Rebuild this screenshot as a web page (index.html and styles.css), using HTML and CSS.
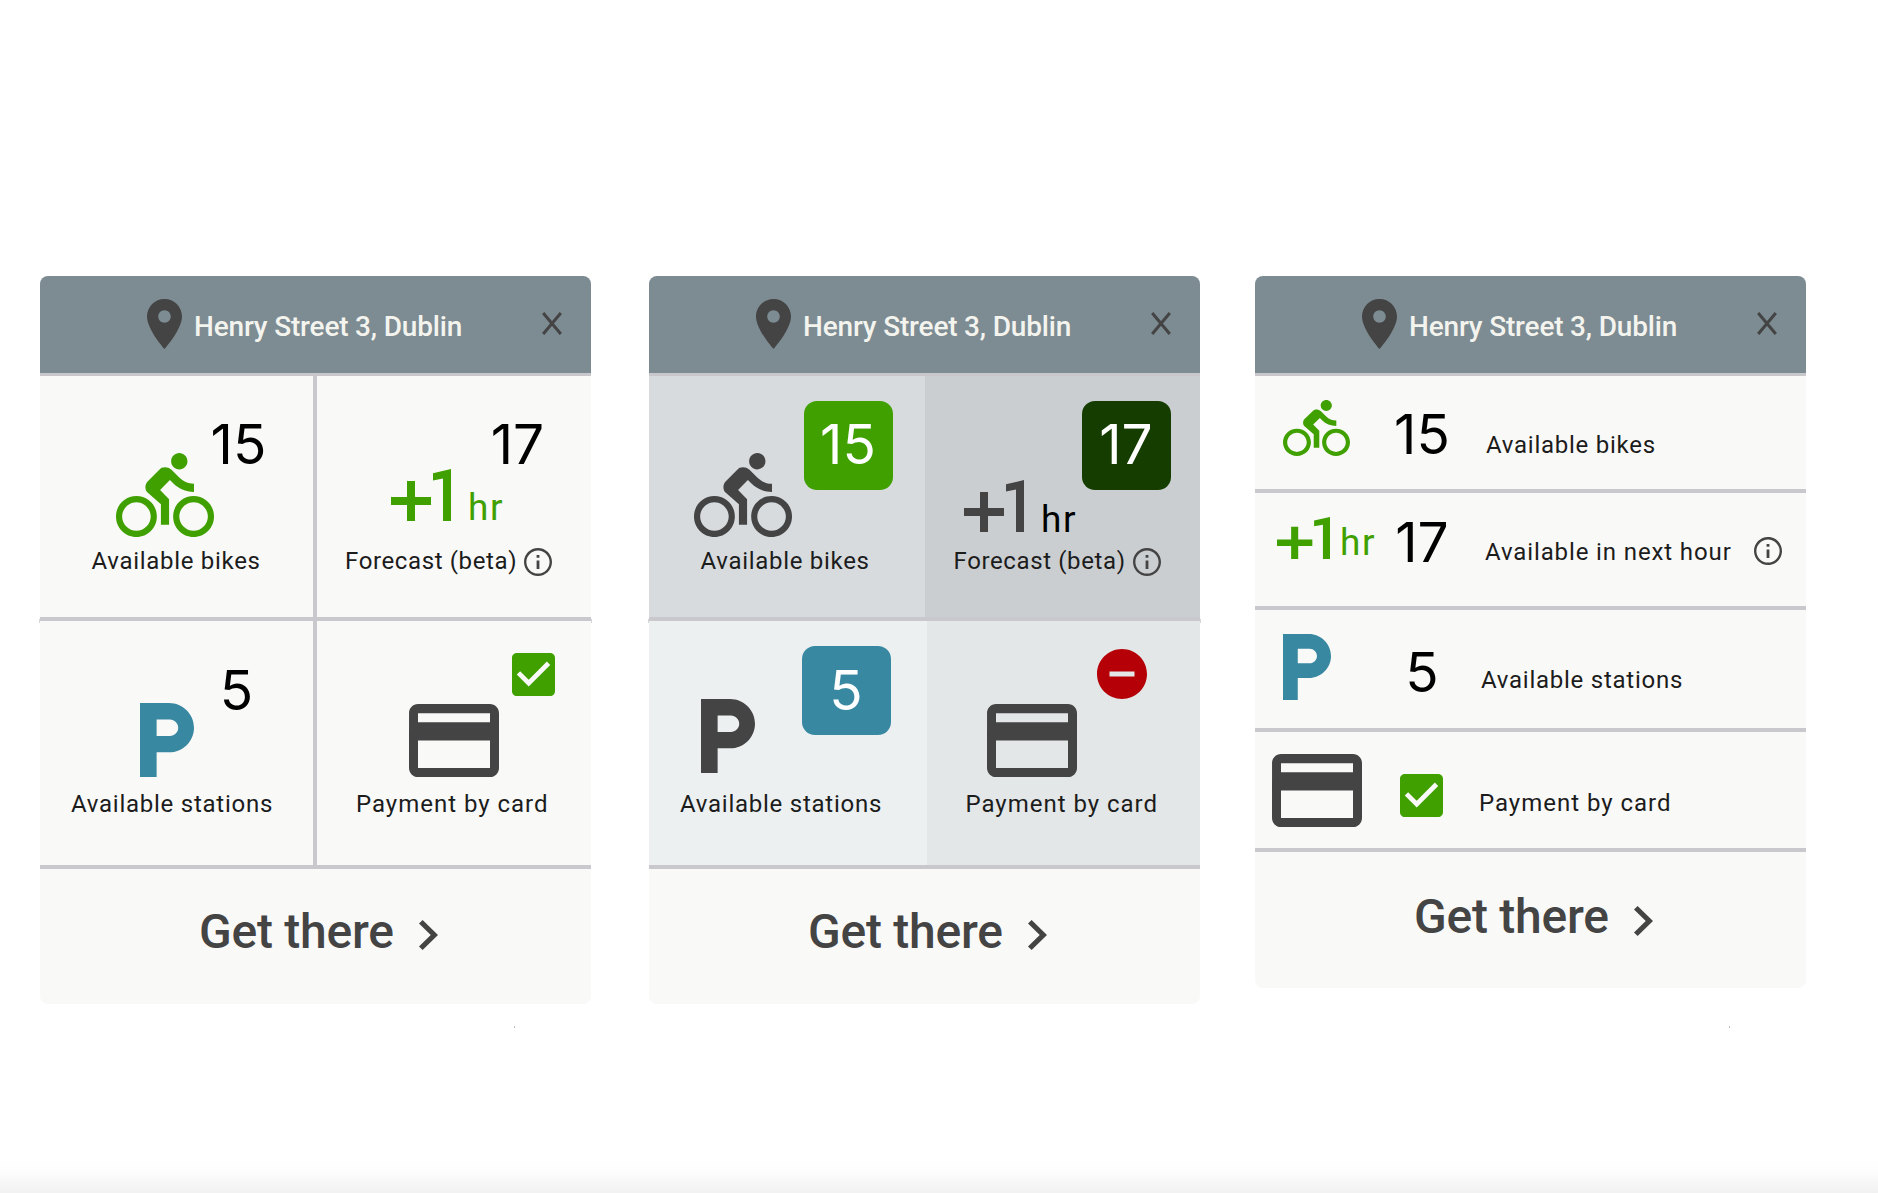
FILE: index.html
```html
<!DOCTYPE html>
<html lang="en">
<head>
<meta charset="utf-8">
<title>Henry Street 3, Dublin</title>
<link rel="stylesheet" href="styles.css">
</head>
<body>
<svg class="sprite" aria-hidden="true">
  <symbol id="pin" viewBox="5 2 14 20" preserveAspectRatio="none"><path d="M12 2C8.13 2 5 5.13 5 9c0 5.25 7 13 7 13s7-7.75 7-13c0-3.87-3.13-7-7-7zm0 9.5c-1.38 0-2.5-1.12-2.5-2.5s1.12-2.5 2.5-2.5 2.5 1.12 2.5 2.5-1.12 2.5-2.5 2.5z"/></symbol>
  <symbol id="close" viewBox="0 0 20 23"><path d="M1.2 1 18.8 22M18.8 1 1.2 22" fill="none" stroke="currentColor" stroke-width="3"/></symbol>
  <symbol id="bike" viewBox="0 1.5 24 20.5" preserveAspectRatio="none"><path d="M15.5 5.5c1.1 0 2-.9 2-2s-.9-2-2-2-2 .9-2 2 .9 2 2 2zM5 12c-2.8 0-5 2.2-5 5s2.2 5 5 5 5-2.2 5-5-2.2-5-5-5zm0 8.5c-1.9 0-3.5-1.6-3.5-3.5s1.6-3.5 3.5-3.5 3.5 1.6 3.5 3.5-1.6 3.5-3.5 3.5zm5.8-10l2.4-2.4.8.8c1.3 1.3 3 2.1 5.1 2.1V9c-1.5 0-2.7-.6-3.6-1.5l-1.9-1.9c-.5-.4-1-.6-1.6-.6s-1.1.2-1.4.6L7.8 8.4c-.4.4-.6.9-.6 1.4 0 .6.2 1.1.6 1.4L11 14v5h2v-6.2l-2.2-2.3zM19 12c-2.8 0-5 2.2-5 5s2.2 5 5 5 5-2.2 5-5-2.2-5-5-5zm0 8.5c-1.9 0-3.5-1.6-3.5-3.5s1.6-3.5 3.5-3.5 3.5 1.6 3.5 3.5-1.6 3.5-3.5 3.5z"/></symbol>
  <symbol id="plus-one" viewBox="4 5 15 13" preserveAspectRatio="none"><path d="M10 8H8v4H4v2h4v4h2v-4h4v-2h-4zm4.5-1.92V7.9l2.5-.5V18h2V5z"/></symbol>
  <symbol id="parking" viewBox="6 3 13 18" preserveAspectRatio="none"><path d="M13 3H6v18h4v-6h3c3.31 0 6-2.69 6-6s-2.69-6-6-6zm.2 8H10V7h3.2c1.1 0 2 .9 2 2s-.9 2-2 2z"/></symbol>
  <symbol id="payment" viewBox="2 4 20 16" preserveAspectRatio="none"><path d="M20 4H4c-1.11 0-1.99.89-1.99 2L2 18c0 1.11.89 2 2 2h16c1.11 0 2-.89 2-2V6c0-1.11-.89-2-2-2zm0 14H4v-6h16v6zm0-10H4V6h16v2z"/></symbol>
  <symbol id="check" viewBox="3 3 18 18"><path d="M19 3H5c-1.11 0-2 .9-2 2v14c0 1.1.89 2 2 2h14c1.11 0 2-.9 2-2V5c0-1.1-.89-2-2-2zm-9 14l-5-5 1.41-1.41L10 14.17l7.59-7.59L19 8l-9 9z"/></symbol>
  <symbol id="remove" viewBox="2 2 20 20"><path d="M12 2C6.48 2 2 6.48 2 12s4.48 10 10 10 10-4.48 10-10S17.52 2 12 2zm5 11H7v-2h10v2z"/></symbol>
  <symbol id="info" viewBox="2 2 20 20"><path d="M11 17h2v-6h-2v6zm1-15C6.48 2 2 6.48 2 12s4.48 10 10 10 10-4.48 10-10S17.52 2 12 2zm0 18.3c-4.58 0-8.3-3.72-8.3-8.3s3.72-8.3 8.3-8.3 8.3 3.72 8.3 8.3-3.72 8.3-8.3 8.3zM11 9h2V7h-2v2z"/></symbol>
  <symbol id="chevron" viewBox="8.59 6 7.41 12" preserveAspectRatio="none"><path d="M10 6L8.59 7.41 13.17 12l-4.58 4.59L10 18l6-6z"/></symbol>
</svg>

<main class="board">
  <article class="card card-plain">
    <header class="card-head">
      <svg class="pin"><use href="#pin"/></svg>
      <h2 class="title">Henry Street 3, Dublin</h2>
      <svg class="close"><use href="#close"/></svg>
    </header>
    <div class="grid">
      <section class="cell bikes">
        <div class="art"><svg class="i-bike green"><use href="#bike"/></svg></div>
        <p class="label">Available bikes</p>
        <span class="count">15</span>
      </section>
      <section class="cell forecast">
        <div class="art"><svg class="i-plus green"><use href="#plus-one"/></svg><span class="hr green">hr</span></div>
        <p class="label">Forecast (beta)<svg class="i-info"><use href="#info"/></svg></p>
        <span class="count">17</span>
      </section>
      <section class="cell stations">
        <div class="art"><svg class="i-park teal"><use href="#parking"/></svg></div>
        <p class="label">Available stations</p>
        <span class="count">5</span>
      </section>
      <section class="cell payment">
        <div class="art"><svg class="i-pay"><use href="#payment"/></svg></div>
        <p class="label">Payment by card</p>
        <svg class="i-check green"><use href="#check"/></svg>
      </section>
    </div>
    <footer class="card-foot">
      <span class="go">Get there</span>
      <svg class="chevron"><use href="#chevron"/></svg>
    </footer>
    <i class="tick tick-left"></i><i class="tick tick-right"></i><i class="speck"></i>
  </article>

  <article class="card card-tinted">
    <header class="card-head">
      <svg class="pin"><use href="#pin"/></svg>
      <h2 class="title">Henry Street 3, Dublin</h2>
      <svg class="close"><use href="#close"/></svg>
    </header>
    <div class="grid">
      <section class="cell bikes">
        <div class="art"><svg class="i-bike"><use href="#bike"/></svg></div>
        <p class="label">Available bikes</p>
        <span class="count">15</span>
      </section>
      <section class="cell forecast">
        <div class="art"><svg class="i-plus"><use href="#plus-one"/></svg><span class="hr">hr</span></div>
        <p class="label">Forecast (beta)<svg class="i-info"><use href="#info"/></svg></p>
        <span class="count">17</span>
      </section>
      <section class="cell stations">
        <div class="art"><svg class="i-park"><use href="#parking"/></svg></div>
        <p class="label">Available stations</p>
        <span class="count">5</span>
      </section>
      <section class="cell payment">
        <div class="art"><svg class="i-pay"><use href="#payment"/></svg></div>
        <p class="label">Payment by card</p>
        <svg class="i-remove"><use href="#remove"/></svg>
      </section>
    </div>
    <footer class="card-foot">
      <span class="go">Get there</span>
      <svg class="chevron"><use href="#chevron"/></svg>
    </footer>
    <i class="tick tick-left"></i><i class="tick tick-right"></i>
  </article>

  <article class="card card-list">
    <header class="card-head">
      <svg class="pin"><use href="#pin"/></svg>
      <h2 class="title">Henry Street 3, Dublin</h2>
      <svg class="close"><use href="#close"/></svg>
    </header>
    <div class="rows">
      <section class="row row-bikes">
        <div class="lead"><svg class="i-bike green"><use href="#bike"/></svg></div>
        <span class="num">15</span>
        <p class="label">Available bikes</p>
      </section>
      <section class="row row-forecast">
        <div class="lead"><svg class="i-plus green"><use href="#plus-one"/></svg><span class="hr green">hr</span></div>
        <span class="num">17</span>
        <p class="label">Available in next hour<svg class="i-info"><use href="#info"/></svg></p>
      </section>
      <section class="row row-stations">
        <div class="lead"><svg class="i-park teal"><use href="#parking"/></svg></div>
        <span class="num">5</span>
        <p class="label">Available stations</p>
      </section>
      <section class="row row-payment">
        <div class="lead"><svg class="i-pay"><use href="#payment"/></svg></div>
        <span class="num"><svg class="i-check green"><use href="#check"/></svg></span>
        <p class="label">Payment by card</p>
      </section>
    </div>
    <footer class="card-foot">
      <span class="go">Get there</span>
      <svg class="chevron"><use href="#chevron"/></svg>
    </footer>
    <i class="speck"></i>
  </article>
</main>
</body>
</html>
```
FILE: styles.css
```css
* { box-sizing: border-box; }

body {
  margin: 0;
  height: 1193px;
  overflow: hidden;
  font-family: Roboto, "Liberation Sans", sans-serif;
  color: #1c1c1c;
  background: #fff linear-gradient(#fff, #fdfdfd 40%, #f1f1f1) bottom / 100% 36px no-repeat;
}

h2, p { margin: 0; }
svg { display: block; flex: none; fill: currentColor; color: #444; }
.sprite { position: absolute; width: 0; height: 0; }
.green { color: #3fa000; }
.teal { color: #3888a2; }

.board {
  display: flex;
  align-items: flex-start;
  padding: 276px 0 0 40px;
}

.card {
  position: relative;
  width: 551px;
  flex: none;
  border-radius: 8px;
  background: #f9f9f8;
}
.card-tinted { margin-left: 58px; }
.card-list { margin-left: 55px; }

/* header */
.card-head {
  display: flex;
  height: 100px;
  padding-left: 107px;
  border-radius: 8px 8px 0 0;
  border-bottom: 3px solid #c8c7cc;
  background: #7d8b92;
}
.pin { width: 35px; height: 50px; margin-top: 23px; }
.title {
  width: 279px;
  margin: 33px 0 0 12px;
  font-size: 28px;
  line-height: 36px;
  font-weight: 500;
  letter-spacing: -0.18px;
  white-space: nowrap;
  color: #f4f4ef;
}
.close { width: 20px; height: 23px; margin: 36px 0 0 69px; }

/* two by two tiles */
.grid {
  display: grid;
  grid-template-columns: 273px 278px;
  grid-template-rows: 245px 248px;
}
.cell { position: relative; border-bottom: 4px solid #c9c8cd; }
.card-plain .forecast, .card-plain .payment { border-left: 4px solid #c9c8cd; }
.art { display: flex; align-items: flex-end; height: 170px; }
.stations .art, .payment .art { height: 168px; }

.label {
  display: flex;
  font-size: 24px;
  line-height: 30px;
  letter-spacing: 0.75px;
  white-space: nowrap;
}
.bikes .label { padding-left: 51.5px; letter-spacing: 0.7px; }
.forecast .label { padding-left: 28px; letter-spacing: 0.62px; }
.stations .label { padding-left: 31px; }
.payment .label { padding-left: 39px; letter-spacing: 0.98px; }

.i-bike { width: 98px; height: 84px; margin: 0 0 9px 76px; }
.i-plus { width: 60px; height: 52px; margin: 0 0 25px 74px; }
.i-park { width: 54px; height: 74px; margin: 0 0 12px 100px; }
.i-pay { width: 90px; height: 73px; margin: 0 0 12px 92px; }
.i-info { width: 28px; height: 28px; margin: 2px 0 0 7px; }
.i-check { width: 43px; height: 43px; }
.hr {
  margin: 0 0 20px 17px;
  font-size: 37px;
  line-height: 37px;
  letter-spacing: 1.6px;
}

.count, .num {
  font-family: Inter, Roboto, sans-serif;
  font-size: 55px;
  line-height: 54px;
  font-weight: 400;
  text-align: center;
  color: #000;
}
.count {
  position: absolute;
  display: flex;
  align-items: center;
  justify-content: center;
  width: 90px;
  height: 90px;
  padding: 0 1px 3px 0;
  border-radius: 13px;
}
.bikes .count { left: 154px; top: 24px; }
.forecast .count { left: 156px; top: 24px; }
.stations .count { left: 152px; top: 25px; }
.payment .i-check { position: absolute; left: 195px; top: 32px; }

/* tinted tiles */
.card-tinted .bikes { margin-right: -3px; background: #d7dbde; }
.card-tinted .forecast { margin-left: 3px; background: #cbced1; }
.card-tinted .stations { margin-right: -5px; background: #ecf0f1; }
.card-tinted .payment { margin-left: 5px; background: #e3e7e8; }
.card-tinted .forecast .label { padding-left: 28.5px; }
.card-tinted .payment .label { padding-left: 38.5px; }
.card-tinted .i-bike { margin-left: 44.5px; }
.card-tinted .i-plus { margin: 0 0 14px 39px; }
.card-tinted .hr { margin-bottom: 8px; color: #000; }
.card-tinted .i-park { margin: 0 0 16px 52px; }
.card-tinted .i-pay { margin-left: 59.5px; }
.card-tinted .count { width: 89px; height: 89px; color: #fff; }
.card-tinted .bikes .count { left: 155px; top: 24.5px; background: #3fa000; }
.card-tinted .forecast .count { left: 157px; top: 24.7px; background: #153d00; }
.card-tinted .stations .count { left: 153px; top: 24.6px; padding-bottom: 1px; background: #3888a2; }
.i-remove { position: absolute; left: 170px; top: 28px; width: 50px; height: 50px; color: #b50008; }

/* list */
.row {
  display: grid;
  grid-template-columns: 136px 62px 1fr;
  align-items: start;
  border-bottom: 4px solid #c9c8cd;
}
.row-bikes { height: 117px; }
.row-forecast { height: 117px; }
.row-stations { height: 122px; }
.row-payment { height: 120px; }
.lead { display: flex; align-items: flex-start; }

.row-bikes .i-bike { width: 67px; height: 56px; margin: 24px 0 0 28px; }
.row-bikes .num { margin-top: 31px; }
.row-bikes .label { margin: 54px 0 0 33px; }

.row-forecast .i-plus { width: 53px; height: 42px; margin: 24px 0 0 22px; }
.row-forecast .hr { margin: 31px 0 0 10px; }
.row-forecast .num { margin-top: 22px; }
.row-forecast .label { margin: 44px 0 0 32px; letter-spacing: 0.88px; }
.row-forecast .i-info { margin: 0 0 0 22px; }

.row-stations .i-park { width: 48px; height: 66px; margin: 24px 0 0 28px; }
.row-stations .num { margin-top: 35px; }
.row-stations .label { margin: 55px 0 0 28px; }

.row-payment .i-pay { width: 90px; height: 73px; margin: 22px 0 0 17px; }
.row-payment .i-check { margin: 42px 0 0 9px; }
.row-payment .label { margin: 56px 0 0 26px; letter-spacing: 0.98px; }

/* footer */
.card-foot { display: flex; height: 135px; padding-left: 159px; }
.go {
  width: 197px;
  margin-top: 35px;
  font-size: 48px;
  line-height: 56px;
  font-weight: 500;
  letter-spacing: -0.25px;
  white-space: nowrap;
  color: #444;
}
.chevron { width: 19px; height: 30px; margin: 51px 0 0 23px; }
.card-list .card-foot { height: 136px; }
.card-list .go { margin-top: 37px; }
.card-list .chevron { margin-top: 54px; }

/* stray marks around the cards */
.tick { position: absolute; top: 343px; width: 1px; height: 4px; background: #d5d4d8; }
.tick-left { left: -1px; }
.tick-right { right: -1px; }
.speck { position: absolute; left: 474px; top: 750px; width: 1px; height: 2px; background: #bbb; }
```
